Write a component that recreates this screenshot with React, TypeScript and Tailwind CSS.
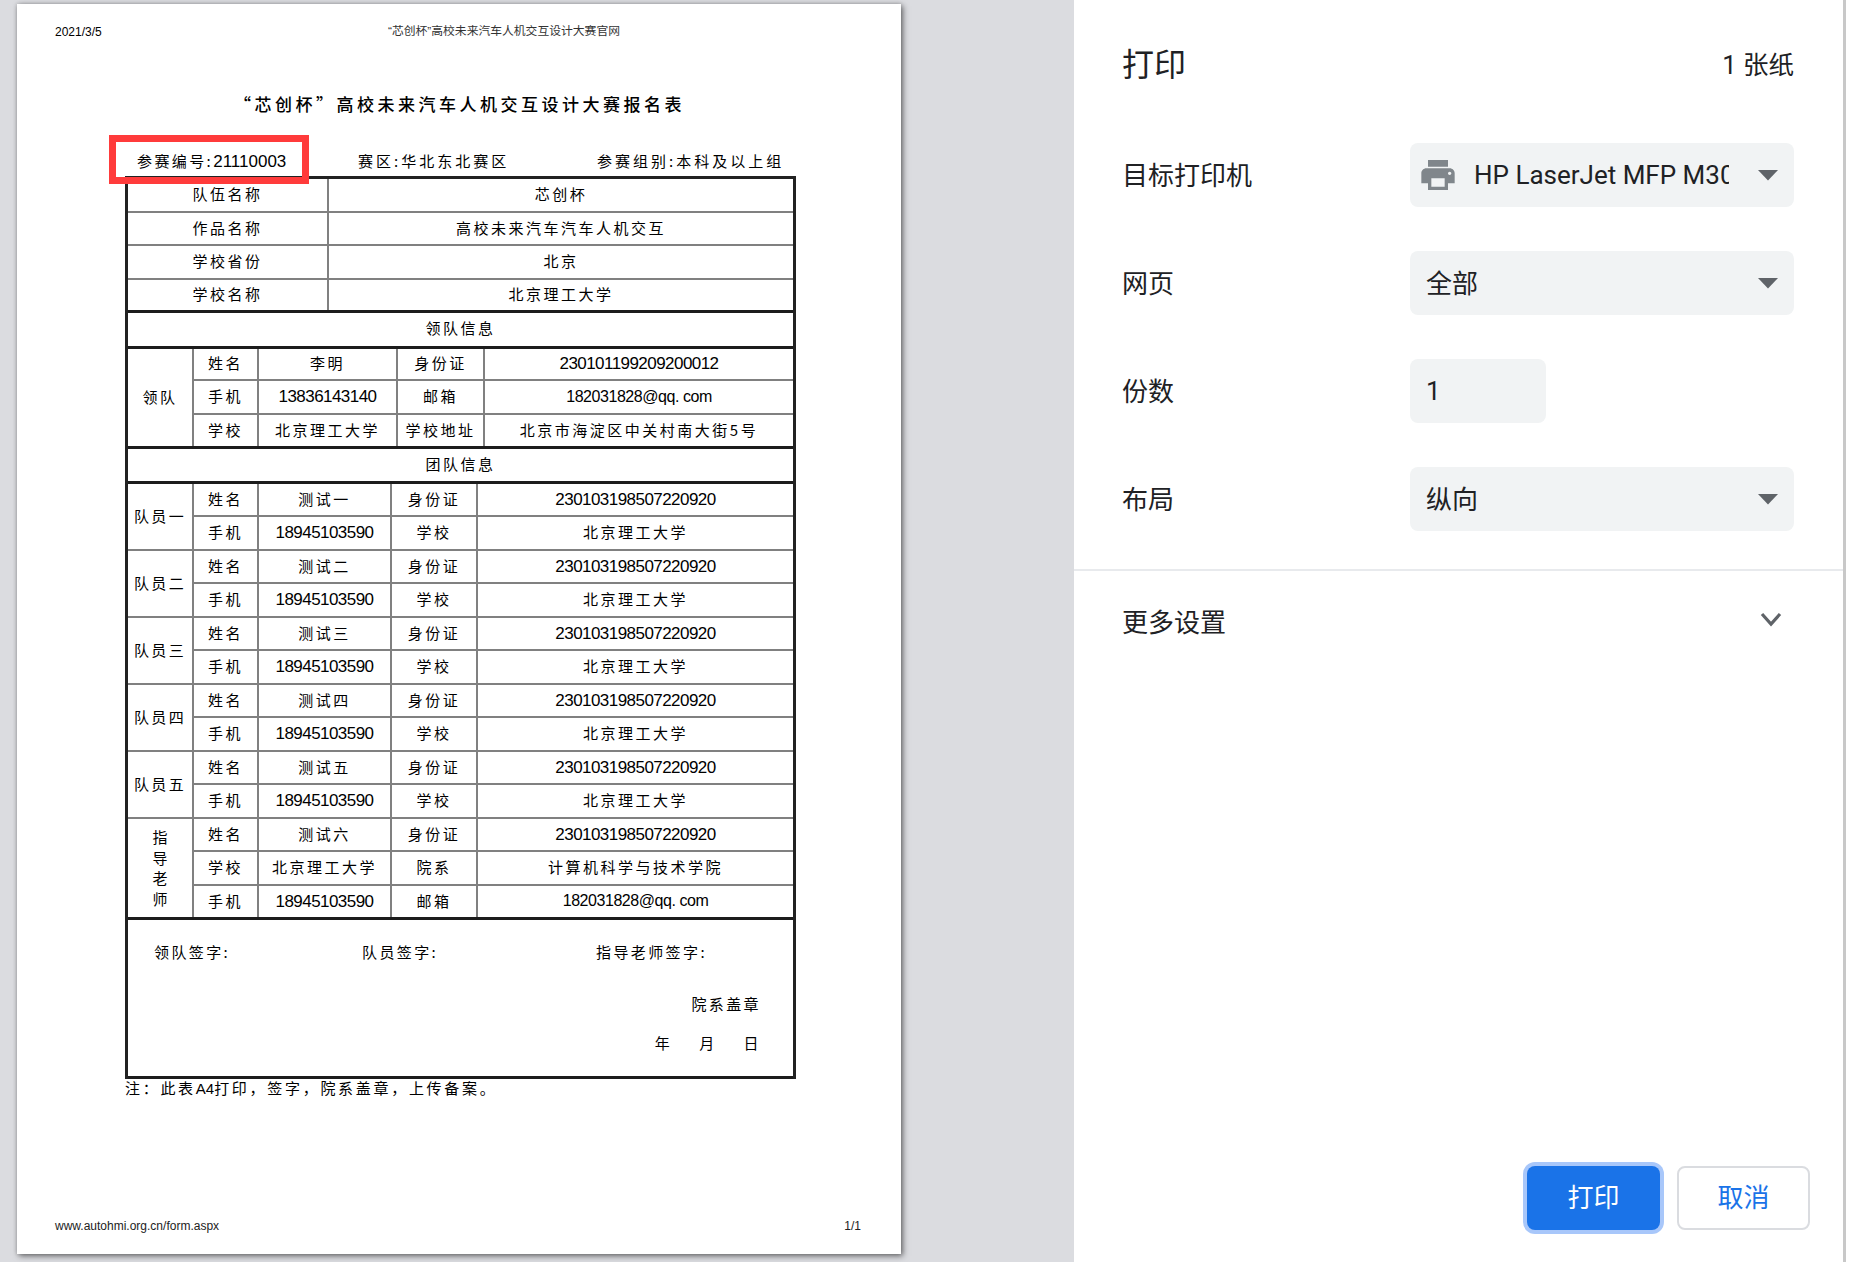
import React from "react";

const serif = "font-['Noto_Sans_CJK_SC','Liberation_Sans',sans-serif]";

function C({ children, w }: { children?: React.ReactNode; w?: number }) {
  return (
    <div style={w ? { width: w } : undefined} className="flex items-center justify-center shrink-0 tracking-[2.5px] text-[15px] font-normal leading-none whitespace-nowrap border-r-2 border-[#808080] last:border-r-0 last:grow pb-[3px]">
      {children}
    </div>
  );
}

function Num({ children }: { children: React.ReactNode }) {
  return <span className="inline-block mt-[2px] font-['Liberation_Sans'] text-[17px] tracking-[-0.55px]">{children}</span>;
}

function Mail() {
  return <span className="inline-block mt-[2px] font-['Liberation_Sans'] text-[16px] tracking-[-0.45px]">182031828@qq. com</span>;
}

function Row({ cells, widths, h, last = false }: { cells: React.ReactNode[]; widths: number[]; h: string; last?: boolean }) {
  return (
    <div className={`flex ${h} ${last ? "" : "border-b-2 border-[#808080]"}`}>
      {cells.map((c, i) => (
        <C key={i} w={widths[i]}>{c}</C>
      ))}
    </div>
  );
}

function Banner({ text, h }: { text: string; h: string }) {
  return (
    <div className={`${h} flex items-center justify-center border-y-[3px] border-[#1c1c1c] text-[15px] font-normal tracking-[2.5px] pb-[2px]`}>
      {text}
    </div>
  );
}

const ID = "230103198507220920";
const PHONE = "18945103590";
const W = [65, 133, 86];
const LW = [65, 139, 87];

function Member({ label, name }: { label: string; name: string }) {
  return (
    <div className="flex h-[67px] border-b-2 border-[#808080]">
      <div className="w-[66px] shrink-0 flex items-center justify-center border-r-2 border-[#808080] text-[15px] font-normal tracking-[2.4px] whitespace-nowrap">{label}</div>
      <div className="grow flex flex-col">
        <Row widths={W} h="h-[33px]" cells={["姓名", name, "身份证", <Num>{ID}</Num>]} />
        <Row widths={W} last h="h-[32px]" cells={["手机", <Num>{PHONE}</Num>, "学校", "北京理工大学"]} />
      </div>
    </div>
  );
}

function Caret() {
  return (
    <svg width="20" height="12" viewBox="0 0 20 12" className="shrink-0">
      <path d="M0 1h20L10 11.5z" fill="#5f6368" />
    </svg>
  );
}

function Select({ children }: { children: React.ReactNode }) {
  return (
    <div className="w-[384px] h-[64px] rounded-lg bg-[#f1f3f4] flex items-center pl-[16px] pr-[16px]">
      {children}
    </div>
  );
}

function Field({ label, children }: { label: string; children: React.ReactNode }) {
  return (
    <div className="flex items-center">
      <div className="w-[288px] text-[26px] leading-none text-[#202124] whitespace-nowrap pt-[2px]">{label}</div>
      {children}
    </div>
  );
}

export default function App() {
  return (
    <div className="flex w-[1861px] h-[1262px] overflow-hidden bg-white font-['Roboto','Noto_Sans_CJK_SC',sans-serif] text-[#202124]">
      <div className="w-[1074px] shrink-0 bg-[#dbdce0] pl-[17px] pt-[4px]">
        <div className={`relative w-[884px] h-[1250px] bg-white shadow-[2px_2px_6px_rgba(0,0,0,0.5),0_0_4px_rgba(0,0,0,0.2)] text-black ${serif}`}>
          <div className="flex h-[56px] items-center pl-[38px] text-[12px] font-['Liberation_Sans']">
            <span className="w-[333px]">2021/3/5</span>
            <span className="text-[11.8px] text-[#333] font-['Liberation_Sans','Noto_Sans_CJK_SC'] whitespace-nowrap">“芯创杯”高校未来汽车人机交互设计大赛官网</span>
          </div>
          <div className="h-[90px] pl-[217px] pb-[2px] flex items-center text-[17px] font-medium tracking-[3.5px] whitespace-nowrap">“芯创杯”高校未来汽车人机交互设计大赛报名表</div>
          <div className="h-[26px] flex items-end pb-[4px] text-[15px] font-normal tracking-[3px] whitespace-nowrap">
            <span className="w-[341px] pl-[120px] shrink-0 tracking-[2.4px] -mb-[2px]">参赛编号:<span className="font-['Liberation_Sans'] text-[17px] tracking-[0px]">21110003</span></span>
            <span className="w-[239px] shrink-0">赛区:华北东北赛区</span>
            <span>参赛组别:本科及以上组</span>
          </div>
          <div className="ml-[108px] w-[671px] border-x-[3px] border-t-[3px] border-[#222]">
            <Row widths={[201]} h="h-[34px]" cells={["队伍名称", "芯创杯"]} />
            <Row widths={[201]} h="h-[33px]" cells={["作品名称", "高校未来汽车汽车人机交互"]} />
            <Row widths={[201]} h="h-[34px]" cells={["学校省份", "北京"]} />
            <Row widths={[201]} last h="h-[30px]" cells={["学校名称", "北京理工大学"]} />
            <Banner text="领队信息" h="h-[39px]" />
            <div className="flex">
              <div className="w-[66px] shrink-0 flex items-center justify-center border-r-2 border-[#808080] text-[15px] font-normal tracking-[2.4px]">领队</div>
              <div className="grow">
                <Row widths={LW} h="h-[32px]" cells={["姓名", "李明", "身份证", <Num>230101199209200012</Num>]} />
                <Row widths={LW} h="h-[34px]" cells={["手机", <Num>13836143140</Num>, "邮箱", <Mail />]} />
                <Row widths={LW} last h="h-[31px]" cells={["学校", "北京理工大学", "学校地址", "北京市海淀区中关村南大街5号"]} />
              </div>
            </div>
            <Banner text="团队信息" h="h-[38px]" />
            <Member label="队员一" name="测试一" />
            <Member label="队员二" name="测试二" />
            <Member label="队员三" name="测试三" />
            <Member label="队员四" name="测试四" />
            <Member label="队员五" name="测试五" />
            <div className="flex">
              <div className="w-[66px] shrink-0 flex flex-col items-center justify-center border-r-2 border-[#808080] text-[15px] font-normal leading-[20.5px]">
                <span>指</span><span>导</span><span>老</span><span>师</span>
              </div>
              <div className="grow">
                <Row widths={W} h="h-[33px]" cells={["姓名", "测试六", "身份证", <Num>{ID}</Num>]} />
                <Row widths={W} h="h-[34px]" cells={["学校", "北京理工大学", "院系", "计算机科学与技术学院"]} />
                <Row widths={W} last h="h-[31px]" cells={["手机", <Num>{PHONE}</Num>, "邮箱", <Mail />]} />
              </div>
            </div>
            <div className="h-[162px] border-y-[3px] border-[#1c1c1c] text-[15px] font-normal tracking-[2.4px]">
              <div className="flex pt-[21px] pl-[26px]">
                <span className="w-[208px] shrink-0">领队签字:</span>
                <span className="w-[234px] shrink-0">队员签字:</span>
                <span>指导老师签字:</span>
              </div>
              <div className="mt-[29px] pr-[32px] text-right">院系盖章</div>
              <div className="mt-[17px] pr-[32px] flex justify-end gap-[27px]"><span>年</span><span>月</span><span>日</span></div>
            </div>
          </div>
          <div className="ml-[108px] -mt-[2px] text-[15px] font-normal tracking-[2.7px] whitespace-nowrap">注{"\uFF1A"}此表<span className="font-['Liberation_Sans'] text-[15px] tracking-[0px]">A4</span>打印{"\uFF0C"}签字{"\uFF0C"}院系盖章{"\uFF0C"}上传备案{"\u3002"}</div>
          <div className="absolute left-[38px] right-[40px] bottom-[19px] flex justify-between text-[12px] font-['Liberation_Sans'] text-[#222]">
            <span>www.autohmi.org.cn/form.aspx</span>
            <span>1/1</span>
          </div>
          <div className="absolute left-[92px] top-[131px] w-[200px] h-[49px] border-[7px] border-[#ff3b3b]" />
        </div>
      </div>
      <div className="w-[769px] shrink-0 flex flex-col bg-white">
        <div className="flex items-center justify-between h-[130px] pl-[48px] pr-[49px]">
          <span className="text-[32px] leading-none">打印</span>
          <span className="text-[25.5px] leading-none mt-[2px]">1 张纸</span>
        </div>
        <div className="pl-[48px] flex flex-col gap-[44px] pt-[13px]">
          <Field label="目标打印机">
            <Select>
              <svg width="40" height="40" viewBox="0 0 24 24" className="-ml-[8px] mr-[16px] shrink-0">
                <path fill="#80868b" d="M19 8H5c-1.66 0-3 1.34-3 3v6h4v4h12v-4h4v-6c0-1.66-1.34-3-3-3zm-3 11H8v-5h8v5zm3-7c-.55 0-1-.45-1-1s.45-1 1-1 1 .45 1 1-.45 1-1 1zm-1-9H6v4h12V3z" />
              </svg>
              <span className="w-[255px] overflow-hidden whitespace-nowrap text-[26px] tracking-[0px] leading-none">HP LaserJet MFP M30</span>
              <span className="grow" />
              <Caret />
            </Select>
          </Field>
          <Field label="网页">
            <Select><span className="text-[26px] grow leading-none mt-[2px]">全部</span><Caret /></Select>
          </Field>
          <Field label="份数">
            <div className="w-[136px] h-[64px] rounded-lg bg-[#f1f3f4] flex items-center pl-[16px] text-[26px]">1</div>
          </Field>
          <Field label="布局">
            <Select><span className="text-[26px] grow leading-none mt-[2px]">纵向</span><Caret /></Select>
          </Field>
        </div>
        <div className="mt-[38px] border-t-2 border-[#e8eaed] h-[104px] flex items-center pl-[48px] pr-[60px] justify-between">
          <span className="text-[26px] leading-none mt-[1px]">更多设置</span>
          <svg width="24" height="24" viewBox="0 0 24 24" fill="none" stroke="#5f6368" strokeWidth="3.2" className="-mt-[7px]"><path d="M3 7l9 10 9-10" /></svg>
        </div>
        <div className="grow" />
        <div className="flex justify-end pr-[33px] pb-[32px] gap-[17px]">
          <div className="w-[133px] h-[64px] rounded-lg bg-[#1a73e8] ring-4 ring-[#a8c7fa] text-white flex items-center justify-center text-[26px]">打印</div>
          <div className="w-[133px] h-[64px] rounded-lg border-2 border-[#dadce0] text-[#1a73e8] flex items-center justify-center text-[26px]">取消</div>
        </div>
      </div>
      <div className="w-[3px] bg-[#c8c8c8] shrink-0" />
      <div className="grow bg-white" />
    </div>
  );
}
